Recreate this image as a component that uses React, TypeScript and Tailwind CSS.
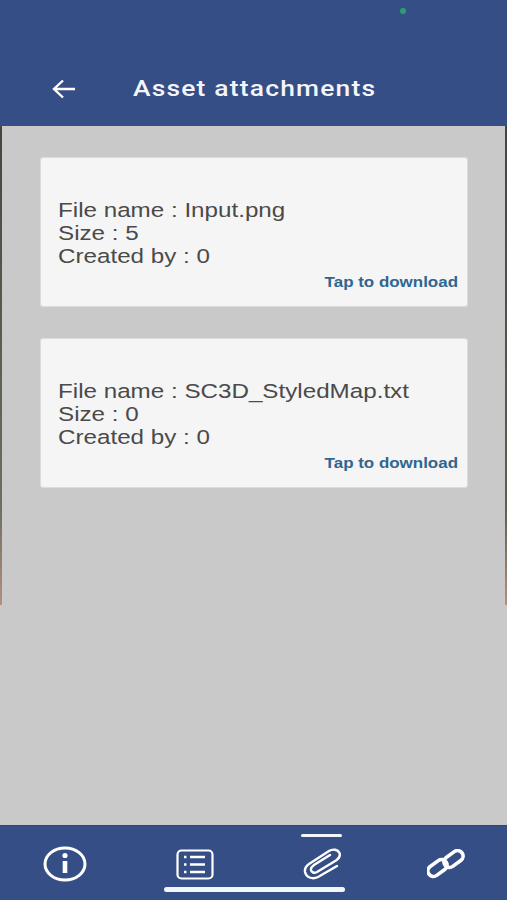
import React from 'react';

const files = [
    { name: 'Input.png', size: 5, createdBy: 0 },
    { name: 'SC3D_StyledMap.txt', size: 0, createdBy: 0 },
];

const InfoIcon = () => (
    <svg width="44" height="36" viewBox="0 0 44 36" fill="none" stroke="white" strokeWidth="3">
        <ellipse cx="22" cy="18" rx="20" ry="16" />
        <path d="M22 15V27" strokeWidth="4.6" />
        <circle cx="22" cy="9.500" r="2.600" fill="white" stroke="none" />
    </svg>
);

const ListIcon = () => (
    <svg width="38" height="31" viewBox="0 0 38 31" fill="none" stroke="white" strokeWidth="2.2">
        <rect x="1.500" y="1.500" width="35" height="28" rx="4" />
        <path d="M14 8h15M14 15.500h15M14 23h15" strokeWidth="2.4" />
        <path d="M8 8h2.500M8 15.500h2.500M8 23h2.500" strokeWidth="2.4" />
    </svg>
);

const ClipIcon = () => (
    <svg width="38" height="32" viewBox="0 0 38 32" fill="none" stroke="white" strokeWidth="2.4" strokeLinecap="round">
        <path d="M34 18 15 29C9 32 3 29 2 24 1.500 20 3 18 6 16L26 3C30 .5 35 1.500 36.500 5 37.500 8 36 10.500 33 12.500L14 24C11 25.500 8.500 24.500 8 22 7.500 20 9 18.500 11 17L27 7" />
    </svg>
);

const ChainIcon = () => (
    <svg width="38" height="30" viewBox="0 0 38 30" fill="none" stroke="white" strokeWidth="3.6">
        <rect x="0" y="13.500" width="21" height="11" rx="5.500" transform="rotate(-36 10.500 19)" />
        <rect x="16" y="4.500" width="21" height="11" rx="5.500" transform="rotate(-36 26.500 10)" />
    </svg>
);

const AttachmentCard = ({ file }: { file: (typeof files)[number] }) => (
    <div className="h-[150px] rounded-[3px] border border-[#dcdcdc] bg-[#f5f5f5] pl-[17px] pr-[9px] pt-[40px]">
        <div className="origin-left scale-x-[1.18] text-[20.5px] leading-[23px] whitespace-nowrap text-[#4a4a4a]">
            <p>File name : {file.name}</p>
            <p>Size : {file.size}</p>
            <p>Created by : {file.createdBy}</p>
        </div>
        <p className="mt-[5px] origin-right scale-x-[1.13] text-right text-[15px] leading-[20px] font-bold text-[#2f668f]">Tap to download</p>
    </div>
);

export default function App() {
    return (
        <div className="relative flex h-[900px] w-[507px] flex-col overflow-hidden bg-[#354e86] font-['Liberation_Sans',sans-serif]">
            <div className="absolute left-[400px] top-[8px] h-[6px] w-[6px] rounded-full bg-[#2f9e6e]" />

            <header className="flex h-[126px] shrink-0 items-end pb-[23px] text-white">
                <div className="flex h-[28px] w-[133px] items-center pl-[52px]">
                    <svg width="24" height="20" viewBox="0 0 24 20" fill="none" stroke="white" strokeWidth="2.4">
                        <path d="M23 10H2M11 1.500 2 10l9 8.500" />
                    </svg>
                </div>
                <h1 className="origin-left scale-x-[1.2] font-['Roboto',sans-serif] text-[22px] leading-[28px] font-medium tracking-[1px] whitespace-nowrap text-[#f4f5f8]">Asset attachments</h1>
            </header>

            <main className="flex min-h-0 flex-1 bg-[#c9c9c9]">
                <div className="h-[479px] w-[2px] shrink-0 bg-linear-to-b from-[#45453f] via-[#6d7060] via-80% to-[#b3907f]" />
                <div className="flex flex-1 flex-col gap-[31px] pl-[38px] pr-[37px] pt-[31px]">
                    {files.map((file) => (
                        <AttachmentCard key={file.name} file={file} />
                    ))}
                </div>
                <div className="h-[479px] w-[2px] shrink-0 bg-linear-to-b from-[#45453f] via-[#5d5f52] via-80% to-[#b3907f]" />
            </main>

            <nav className="relative grid h-[75px] shrink-0 grid-cols-[130px_130px_124px_123px] items-center border-t border-[#2f4674] pt-[2px]">
                <div className="flex justify-center"><InfoIcon /></div>
                <div className="flex justify-center"><ListIcon /></div>
                <div className="flex justify-center"><ClipIcon /></div>
                <div className="flex justify-center"><ChainIcon /></div>
                <div className="absolute left-[301px] top-[8px] h-[3px] w-[41px] rounded-full bg-[#f4f5f8]" />
                <div className="absolute left-[164px] top-[61px] h-[5px] w-[181px] rounded-full bg-[#f4f5f8]" />
            </nav>
        </div>
    );
}
